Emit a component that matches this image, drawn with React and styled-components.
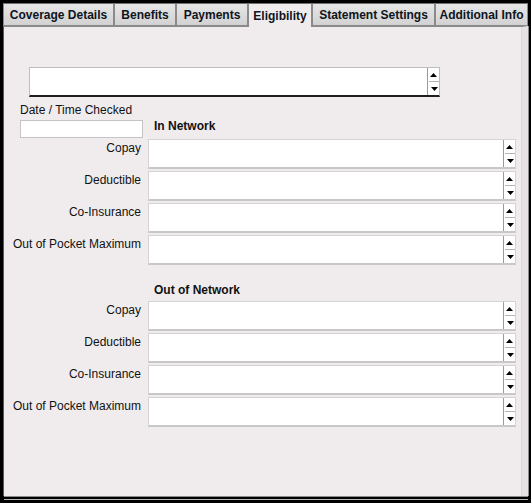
import styled, { createGlobalStyle } from "styled-components";

const GlobalStyle = createGlobalStyle`
  html, body {
    margin: 0;
    padding: 0;
    background: #000;
  }
  * {
    box-sizing: border-box;
  }
`;

const tabs = [
  { label: "Coverage Details", width: 111 },
  { label: "Benefits", width: 62 },
  { label: "Payments", width: 72 },
  { label: "Eligibility", width: 64, active: true },
  { label: "Statement Settings", width: 123 },
  { label: "Additional Info", width: 93 },
];

const fields = ["Copay", "Deductible", "Co-Insurance", "Out of Pocket Maximum"];

const App = () => {
  return (
    <>
      <GlobalStyle />
      <Window>
        <TabStrip>
          {tabs.map((tab) => (
            <Tab key={tab.label} $active={tab.active} style={{ width: tab.width }}>
              {tab.label}
            </Tab>
          ))}
        </TabStrip>
        <Panel>
          <NotesBox>
            <Spinner />
          </NotesBox>
          <DateLabel>Date / Time Checked</DateLabel>
          <HeadingRow>
            <DateInput />
            <SectionTitle>In Network</SectionTitle>
          </HeadingRow>
          <FieldList>
            {fields.map((label) => (
              <FieldRow key={label}>
                <FieldLabel>{label}</FieldLabel>
                <FieldBox>
                  <Spinner />
                </FieldBox>
              </FieldRow>
            ))}
          </FieldList>
          <HeadingRow $spaced>
            <LabelSpacer />
            <SectionTitle>Out of Network</SectionTitle>
          </HeadingRow>
          <FieldList>
            {fields.map((label) => (
              <FieldRow key={label}>
                <FieldLabel>{label}</FieldLabel>
                <FieldBox>
                  <Spinner />
                </FieldBox>
              </FieldRow>
            ))}
          </FieldList>
        </Panel>
        <BottomEdge />
      </Window>
    </>
  );
};

const Spinner = () => (
  <SpinColumn>
    <SpinButton>
      <Arrow viewBox="0 0 7 4">
        <polygon points="0,4 7,4 3.5,0" />
      </Arrow>
    </SpinButton>
    <SpinButton $down>
      <Arrow viewBox="0 0 7 4">
        <polygon points="0,0 7,0 3.5,4" />
      </Arrow>
    </SpinButton>
  </SpinColumn>
);

const Window = styled.div`
  width: 531px;
  height: 503px;
  background: #000;
  padding: 3px 3px 0 3px;
  display: flex;
  flex-direction: column;
  font-family: "Liberation Sans", Arial, sans-serif;
  color: #111;
`;

const TabStrip = styled.div`
  display: flex;
  height: 23px;
  align-items: flex-end;
`;

const Tab = styled.div`
  height: ${(p) => (p.$active ? "24px" : "23px")};
  margin-bottom: ${(p) => (p.$active ? "-1px" : "0")};
  background: ${(p) =>
    p.$active ? "#f0ecee" : "linear-gradient(#e6e6e6, #d2d2d2)"};
  border: 1px solid #8a8a8a;
  border-bottom: ${(p) => (p.$active ? "none" : "1px solid #8a8a8a")};
  border-top-color: #6c6c6c;
  font-size: 12px;
  font-weight: bold;
  color: #0e1420;
  display: flex;
  align-items: center;
  justify-content: center;
  padding-top: 1px;
  position: relative;
  z-index: ${(p) => (p.$active ? 1 : 0)};
  white-space: nowrap;
`;

const Panel = styled.div`
  flex: 1;
  background: #f0ecee;
  border-left: 1px solid #5a5a5a;
  border-right: 6px solid #e6e2e4;
  box-shadow: inset -1px 0 0 #dcd8da, 1px 0 0 #8c8c8c;
  border-top: 1px solid #8a8a8a;
  padding: 40px 0 0 0;
  display: flex;
  flex-direction: column;
`;

const BottomEdge = styled.div`
  height: 7px;
  margin-left: 1px;
  border-top: 1px solid #8c8c8c;
  background: linear-gradient(#000 0 2px, #b8b8b8 2px 3px, #000 3px);
`;

const NotesBox = styled.div`
  margin-left: 25px;
  width: 411px;
  height: 30px;
  background: #fff;
  border: 1px solid #bdbdbd;
  border-bottom: 2px solid #1e1e1e;
  display: flex;
  justify-content: flex-end;
`;

const DateLabel = styled.div`
  margin: 6px 0 0 16px;
  font-size: 12px;
  line-height: 14px;
`;

const HeadingRow = styled.div`
  display: flex;
  align-items: flex-start;
  margin-top: ${(p) => (p.$spaced ? "19px" : "3px")};
  margin-bottom: ${(p) => (p.$spaced ? "4px" : "1px")};
`;

const DateInput = styled.div`
  margin-left: 16px;
  width: 123px;
  height: 18px;
  background: #fff;
  border: 1px solid #c4c4c4;
`;

const LabelSpacer = styled.div`
  width: 139px;
`;

const SectionTitle = styled.div`
  margin-left: 11px;
  font-size: 12px;
  font-weight: bold;
  line-height: 14px;
  margin-top: -1px;
`;

const FieldList = styled.div`
  display: flex;
  flex-direction: column;
  gap: 2px;
`;

const FieldRow = styled.div`
  display: grid;
  grid-template-columns: 137px 368px;
  column-gap: 7px;
  align-items: start;
`;

const FieldLabel = styled.div`
  text-align: right;
  font-size: 12px;
  line-height: 14px;
  padding-top: 2px;
  white-space: nowrap;
`;

const FieldBox = styled.div`
  height: 30px;
  background: #fff;
  border: 1px solid #d4d4d4;
  border-bottom: 2px solid #c8c8c8;
  display: flex;
  justify-content: flex-end;
`;

const SpinColumn = styled.div`
  width: 12px;
  display: flex;
  flex-direction: column;
  border-left: 1px solid #9a9a9a;
  background: #fff;
`;

const SpinButton = styled.div`
  flex: 1;
  display: flex;
  align-items: center;
  justify-content: center;
  border-top: ${(p) => (p.$down ? "1px solid #b4b4b4" : "none")};
  margin-left: ${(p) => (p.$down ? "1px" : "0")};
`;

const Arrow = styled.svg`
  width: 7px;
  height: 4px;
  fill: #000;
`;

export default App;
